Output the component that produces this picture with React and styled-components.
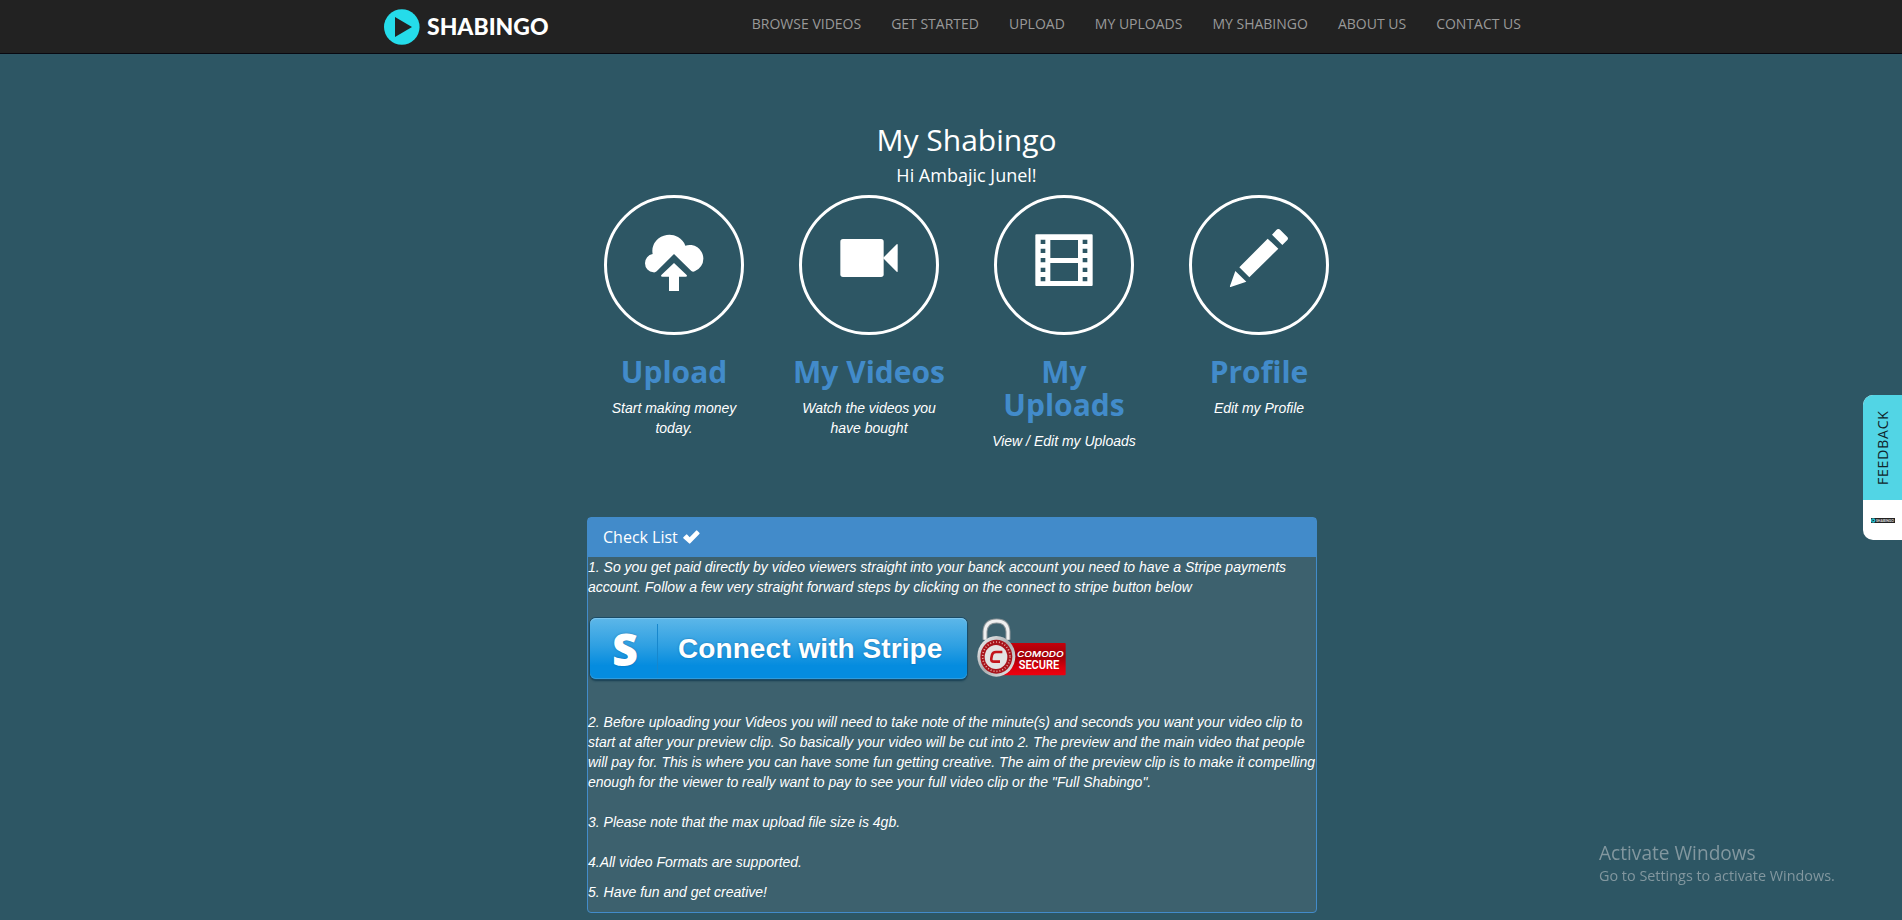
import React from 'react';
import styled, { createGlobalStyle } from 'styled-components';

const Global = createGlobalStyle`
  * { box-sizing: border-box; }
  html, body { margin: 0; padding: 0; }
  body {
    background: #2d5664;
    color: #fff;
    font: 14px/20px "Liberation Sans", Arial, sans-serif;
    overflow: hidden;
  }
  h1, h2, h3, p { margin: 0; }
  a { text-decoration: none; }
  svg { display: block; }
`;

const display = '"Open Sans", "Noto Sans", sans-serif';

const Navbar = styled.header`
  height: 54px;
  background: #222;
  border-bottom: 1px solid #080810;
`;

const NavInner = styled.div`
  width: 1140px;
  height: 53px;
  margin: 0 auto;
  display: flex;
  justify-content: space-between;
`;

const Brand = styled.a`
  margin: 9px 0 0 3px;
`;

const NavList = styled.nav`
  display: flex;
  gap: 30px;
  padding-top: 14px;
`;

const NavLink = styled.a`
  color: #999;
  font-family: ${display};
  font-size: 14px;
  line-height: 20px;
  white-space: nowrap;
`;

const Main = styled.main`
  width: 780px;
  margin-left: 576.5px;
  padding-top: 69px;
`;

const PageTitle = styled.h1`
  font: 400 30px/33px ${display};
  text-align: center;
`;

const Greeting = styled.h2`
  margin-top: 9px;
  font: 400 18px/20px ${display};
  text-align: center;
`;

const Tiles = styled.section`
  display: grid;
  grid-template-columns: repeat(4, 195px);
  height: 312px;
  margin-top: 10px;
`;

const Tile = styled.article`
  display: flex;
  flex-direction: column;
  align-items: center;
  padding: 0 15px;
  text-align: center;
`;

const Ring = styled.div`
  width: 140px;
  height: 140px;
  border: 3px solid #fff;
  border-radius: 50%;
  svg { width: 134px; height: 134px; fill: #fff; }
`;

const TileTitle = styled.h3`
  margin-top: 20px;
  width: ${(p) => p.$width || 165}px;
  color: #428bca;
  font: 700 30px/33px ${display};
`;

const TileText = styled.p`
  margin-top: 10px;
  width: 150px;
  font-style: italic;
`;

const Panel = styled.section`
  width: 730px;
  height: 396px;
  margin: 10px 0 0 10.5px;
  border: 1px solid #428bca;
  border-radius: 4px;
  background: #3d616e;
`;

const PanelHeading = styled.div`
  display: flex;
  align-items: center;
  gap: 5px;
  height: 39px;
  padding: 0 15px 2px;
  background: #428bca;
  font: 400 16px/18px ${display};
`;

const Step = styled.p`
  margin-top: ${(p) => p.$gap || 0}px;
  font-style: italic;
  white-space: nowrap;
`;

const Actions = styled.div`
  display: flex;
  align-items: flex-start;
  gap: 10px;
  margin: 21px 0 0 2px;
  height: 82px;
`;

const StripeButton = styled.a`
  display: flex;
  align-items: center;
  width: 377px;
  height: 61px;
  border-radius: 6px;
  color: #fff;
  background: linear-gradient(#5db7e9, #2fa0e2 45%, #058cdf 78%, #058cdf);
  box-shadow: 0 0 0 1px #1a4c68, 0 2px 2px #153e52, inset 0 1px 0 #7cc5ee, inset 0 -1px 0 #2f9bdc;
  text-shadow: 0 0 2px rgba(0, 62, 116, 0.5);
`;

const StripeMark = styled.span`
  width: 68px;
  padding-left: 3px;
  border-right: 1px solid #1787cd;
  text-align: center;
  font: 800 45px/50px ${display};
`;

const StripeLabel = styled.span`
  padding: 1px 0 0 20px;
  font: 700 28px/50px "Liberation Sans", Arial, sans-serif;
  letter-spacing: 0.08px;
  white-space: nowrap;
`;

const Feedback = styled.aside`
  position: fixed;
  top: 395px;
  right: 0;
  width: 39px;
  height: 145px;
  display: flex;
  flex-direction: column;
  border-radius: 10px 0 0 10px;
  overflow: hidden;
  background: #fff;
`;

const FeedbackLabel = styled.div`
  height: 105px;
  display: flex;
  align-items: center;
  justify-content: center;
  background: #52d5e5;
  color: #10252b;
  font: 400 14px/20px ${display};
  letter-spacing: 0.8px;
  writing-mode: vertical-rl;
  transform: rotate(180deg);
`;

const FeedbackLogo = styled.div`
  flex: 1;
  padding: 16px 0 0 8px;
`;

const Activation = styled.div`
  position: fixed;
  top: 840px;
  left: 1599px;
  color: #82979f;
  font-family: ${display};
  white-space: nowrap;
`;

const ActivationTitle = styled.p`
  font-size: 19.1px;
  line-height: 27px;
`;

const ActivationText = styled.p`
  font-size: 14.4px;
  line-height: 18px;
`;

const Logo = () => (
  <svg width="166" height="36" viewBox="0 0 166 36">
    <circle cx="17.8" cy="18" r="17.8" fill="#25dcea" />
    <path d="M11 8L28 18L11 28Z" fill="#222" />
    <text x="43" y="25.7" textLength="121.5" lengthAdjust="spacingAndGlyphs" fill="#fff" fontFamily="Lato, sans-serif" fontWeight="900" fontSize="22.8">SHABINGO</text>
  </svg>
);

const CloudUploadIcon = () => (
  <svg viewBox="81 264 402 402">
    <path d="M220 487A26 27 0 0 1 195 460A28 28 0 0 1 218 432A50 50 0 0 1 217 422A51 49 0 0 1 316 407A41 41 0 0 1 370 444A41 41 0 0 1 344 484Q339 487 334 483L282 432L230 484Q226 488 220 487Z" />
    <path d="M282 459L320 495Q323 500 317 500H297V543H267V500H247Q241 500 244 495Z" />
  </svg>
);

const VideoIcon = () => (
  <svg viewBox="666 264 402 402">
    <rect x="781" y="387" width="130" height="114" rx="8" />
    <path d="M909 444L950 403Q953 401 953 405V484Q953 488 950 485Z" />
  </svg>
);

const holes = [389, 416, 444, 473, 501].map((y) => `M242 ${y}h14v13h-14ZM368 ${y}h14v13h-14Z`).join('');

const FilmIcon = () => (
  <svg viewBox="111 264 402 402">
    <path fillRule="evenodd" d={`M229 373H395Q398 373 398 376V525Q398 528 395 528H229Q226 528 226 525V376Q226 373 229 373ZM271 390H354V444H271ZM271 459H354V513H271Z${holes}`} />
  </svg>
);

const PencilIcon = () => (
  <svg viewBox="696 264 402 402">
    <path d="M936 374L949 360Q955 354 961 360L982 381Q986 385 982 390L967 405ZM923 386L955 416L868 502L838 472ZM826 483L859 515L812 531Q809 531 810 528Z" />
  </svg>
);

const CheckIcon = () => (
  <svg width="17" height="14" viewBox="0 0 51 42" fill="#fff">
    <path d="M1 22L9 14Q11 12 13 14L20 22L39 2Q41 0 43 2L49 8Q51 10 49 12L22 40Q20 42 18 40L1 25Q0 24 1 22Z" />
  </svg>
);

const SecureBadge = () => (
  <svg width="90" height="61" viewBox="50 340 270 183">
    <defs>
      <linearGradient id="plate" x1="0" y1="0" x2="0" y2="1">
        <stop offset="0" stopColor="#c4000a" />
        <stop offset="0.4" stopColor="#9e0008" />
        <stop offset="0.75" stopColor="#d9000c" />
        <stop offset="1" stopColor="#ef0010" />
      </linearGradient>
      <linearGradient id="steel" x1="0" y1="0" x2="1" y2="1">
        <stop offset="0" stopColor="#f7f7f7" />
        <stop offset="0.5" stopColor="#a9adb0" />
        <stop offset="1" stopColor="#eeeeee" />
      </linearGradient>
    </defs>
    <path d="M74 405V381Q76 349 109 349Q141 349 143 381V405" fill="none" stroke="#8d9599" strokeWidth="15" />
    <path d="M74 405V381Q76 349 109 349Q141 349 143 381V405" fill="none" stroke="#f0f0f0" strokeWidth="9" />
    <rect x="110" y="415" width="206" height="97" rx="3" fill="url(#plate)" />
    <ellipse cx="108" cy="455" rx="57" ry="61" fill="url(#steel)" />
    <ellipse cx="108" cy="456" rx="48" ry="51" fill="#a8141b" />
    <ellipse cx="108" cy="456" rx="41" ry="44" fill="none" stroke="#e6a9a5" strokeWidth="5" strokeDasharray="3 6" />
    <ellipse cx="107" cy="457" rx="34" ry="36" fill="#e3e3e3" />
    <path d="M126 442H107Q97 442 95 451L93 461Q91 471 101 471H119" fill="none" stroke="#c4141b" strokeWidth="8" />
    <text x="170" y="456" textLength="140" lengthAdjust="spacingAndGlyphs" fill="#fff" fontFamily="Inter, sans-serif" fontStyle="italic" fontWeight="600" fontSize="24">COMODO</text>
    <text x="175" y="493" textLength="122" lengthAdjust="spacingAndGlyphs" fill="#fff" fontFamily="Roboto, sans-serif" fontWeight="600" fontSize="36">SECURE</text>
  </svg>
);

const MiniLogo = () => (
  <svg width="26" height="9" viewBox="0 -2 26 9">
    <rect width="24" height="5" fill="#222" />
    <circle cx="2.2" cy="2.5" r="2.2" fill="#25c5d2" />
    <path d="M1.5 1.4L3.4 2.5L1.5 3.6Z" fill="#222" />
    <text x="5" y="4" textLength="18" lengthAdjust="spacingAndGlyphs" fill="#ddd" fontFamily="Lato, sans-serif" fontWeight="900" fontSize="4">SHABINGO</text>
  </svg>
);

const links = ['BROWSE VIDEOS', 'GET STARTED', 'UPLOAD', 'MY UPLOADS', 'MY SHABINGO', 'ABOUT US', 'CONTACT US'];

const tiles = [
  { title: 'Upload', text: 'Start making money today.', Icon: CloudUploadIcon },
  { title: 'My Videos', text: 'Watch the videos you have bought', Icon: VideoIcon },
  { title: 'My Uploads', text: 'View / Edit my Uploads', Icon: FilmIcon, width: 140 },
  { title: 'Profile', text: 'Edit my Profile', Icon: PencilIcon },
];

export default function App() {
  return (
    <>
      <Global />
      <Navbar>
        <NavInner>
          <Brand><Logo /></Brand>
          <NavList>
            {links.map((label) => <NavLink key={label}>{label}</NavLink>)}
          </NavList>
        </NavInner>
      </Navbar>
      <Main>
        <PageTitle>My Shabingo</PageTitle>
        <Greeting>Hi Ambajic Junel!</Greeting>
        <Tiles>
          {tiles.map(({ title, text, Icon, width }) => (
            <Tile key={title}>
              <Ring><Icon /></Ring>
              <TileTitle $width={width}>{title}</TileTitle>
              <TileText>{text}</TileText>
            </Tile>
          ))}
        </Tiles>
        <Panel>
          <PanelHeading>Check List <CheckIcon /></PanelHeading>
          <Step>
            1. So you get paid directly by video viewers straight into your banck account you need to have a Stripe payments<br />
            account. Follow a few very straight forward steps by clicking on the connect to stripe button below
          </Step>
          <Actions>
            <StripeButton>
              <StripeMark>S</StripeMark>
              <StripeLabel>Connect with Stripe</StripeLabel>
            </StripeButton>
            <SecureBadge />
          </Actions>
          <Step $gap={12}>
            2. Before uploading your Videos you will need to take note of the minute(s) and seconds you want your video clip to<br />
            start at after your preview clip. So basically your video will be cut into 2. The preview and the main video that people<br />
            will pay for. This is where you can have some fun getting creative. The aim of the preview clip is to make it compelling<br />
            enough for the viewer to really want to pay to see your full video clip or the "Full Shabingo".
          </Step>
          <Step $gap={20}>3. Please note that the max upload file size is 4gb.</Step>
          <Step $gap={20}>4.All video Formats are supported.</Step>
          <Step $gap={10}>5. Have fun and get creative!</Step>
        </Panel>
      </Main>
      <Feedback>
        <FeedbackLabel>FEEDBACK</FeedbackLabel>
        <FeedbackLogo><MiniLogo /></FeedbackLogo>
      </Feedback>
      <Activation>
        <ActivationTitle>Activate Windows</ActivationTitle>
        <ActivationText>Go to Settings to activate Windows.</ActivationText>
      </Activation>
    </>
  );
}
